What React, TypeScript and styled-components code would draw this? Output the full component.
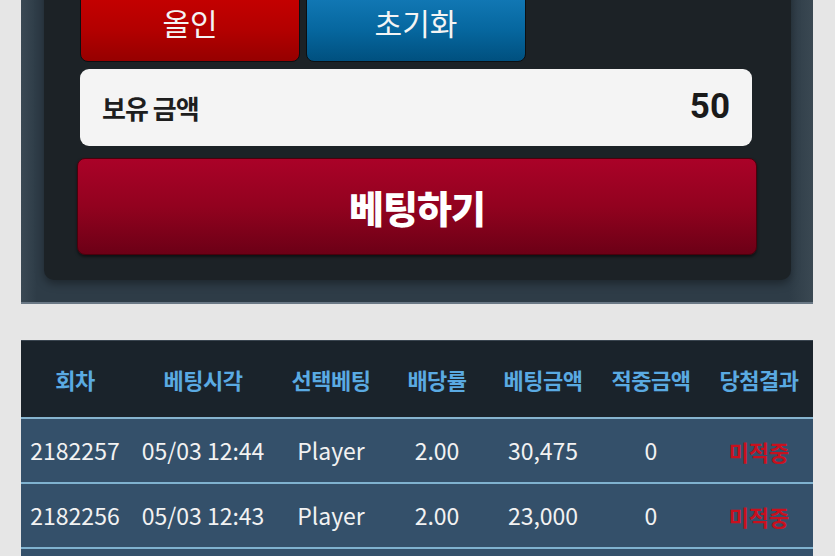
import React from 'react';
import styled, { createGlobalStyle } from 'styled-components';

const GlobalStyle = createGlobalStyle`
  html, body {
    margin: 0;
    padding: 0;
    background: #e6e6e6;
    overflow: hidden;
  }
  body {
    font-family: "Noto Sans CJK KR", "Noto Sans", sans-serif;
  }
`;

type Bet = {
  round: string;
  time: string;
  pick: string;
  odds: string;
  amount: string;
  win: string;
  result: string;
};

const bets: Bet[] = [
  { round: '2182257', time: '05/03 12:44', pick: 'Player', odds: '2.00', amount: '30,475', win: '0', result: '미적중' },
  { round: '2182256', time: '05/03 12:43', pick: 'Player', odds: '2.00', amount: '23,000', win: '0', result: '미적중' },
  { round: '2182255', time: '05/03 12:42', pick: 'Banker', odds: '1.95', amount: '10,000', win: '0', result: '미적중' },
];

const columns = ['회차', '베팅시각', '선택베팅', '배당률', '베팅금액', '적중금액', '당첨결과'];

const Page = styled.div`
  margin-top: -58px;
  padding: 0 22px 40px 21px;
  display: flex;
  flex-direction: column;
  gap: 36px;
`;

const OuterPanel = styled.section`
  background: linear-gradient(90deg, #3a4954 0%, #2e3c47 2%, #2e3c47 97%, #3a4852 100%);
  border-bottom: 2px solid #6a7885;
  padding: 20px 22px 22px 23px;
`;

const InnerPanel = styled.div`
  background: #1c2226;
  border-radius: 0 0 10px 10px;
  box-shadow: 0 4px 8px rgba(0, 0, 0, 0.35);
  padding: 20px 39px 25px 36px;
  display: flex;
  flex-direction: column;
`;

const ButtonRow = styled.div`
  display: flex;
  gap: 6px;
`;

const ActionButton = styled.button<{ $tone: 'red' | 'blue' }>`
  width: 220px;
  height: 80px;
  border: 1px solid #0c0f12;
  border-radius: 8px;
  padding: 0;
  color: #f4f4f4;
  font-family: "Noto Sans CJK KR", sans-serif;
  font-size: 30px;
  line-height: 1;
  font-weight: 400;
  display: flex;
  align-items: center;
  justify-content: center;
  background: ${({ $tone }) =>
    $tone === 'red'
      ? 'linear-gradient(180deg, #cc0000 0%, #b30000 60%, #960000 100%)'
      : 'linear-gradient(180deg, #1780bf 0%, #06679f 60%, #00507f 100%)'};
`;

const BalanceBox = styled.div`
  margin-top: 7px;
  height: 77px;
  background: #f4f4f4;
  border-radius: 9px;
  display: flex;
  align-items: center;
  justify-content: space-between;
  padding: 0 22px;
`;

const BalanceLabel = styled.span`
  font-family: "Noto Sans CJK KR", sans-serif;
  font-size: 26px;
  line-height: 1;
  font-weight: 700;
  color: #1e1e1e;
  letter-spacing: -1px;
`;

const BalanceValue = styled.span`
  font-family: Roboto, "Liberation Sans", sans-serif;
  font-size: 35px;
  line-height: 1;
  font-weight: 700;
  color: #1a1a1a;
  margin-bottom: 2px;
`;

const BetButton = styled.button`
  margin: 12px -5px 0 -3px;
  height: 97px;
  border: 1px solid #4a000c;
  border-radius: 8px;
  padding: 0;
  background: linear-gradient(180deg, #aa0228 0%, #92021f 50%, #6c0016 100%);
  box-shadow: 0 2px 3px rgba(0, 0, 0, 0.5);
  color: #ffffff;
  font-family: "Noto Sans CJK KR", sans-serif;
  font-size: 38px;
  line-height: 1;
  font-weight: 900;
  letter-spacing: -1px;
`;

const Table = styled.div`
  width: 792px;
  display: flex;
  flex-direction: column;
`;

const gridCols = '108px 148px 108px 104px 108px 108px 108px';

const HeaderRow = styled.div`
  display: grid;
  grid-template-columns: ${gridCols};
  height: 76px;
  align-items: center;
  background: #1a232b;
  border-top: 1px solid #3a4550;
  border-bottom: 2px solid #86b4cf;
`;

const HeaderCell = styled.div`
  text-align: center;
  color: #5aaae2;
  font-size: 22px;
  line-height: 1;
  font-weight: 700;
  letter-spacing: -0.5px;
`;

const BodyRow = styled.div`
  display: grid;
  grid-template-columns: ${gridCols};
  height: 63px;
  align-items: center;
  background: #34506a;
  border-bottom: 2px solid #7fb2cf;
`;

const Cell = styled.div<{ $result?: boolean }>`
  text-align: center;
  color: ${({ $result }) => ($result ? '#c8101e' : '#f2f2f2')};
  font-size: ${({ $result }) => ($result ? '22px' : '23px')};
  font-weight: ${({ $result }) => ($result ? 700 : 400)};
  line-height: 1;
  white-space: nowrap;
`;

export default function App() {
  return (
    <>
      <GlobalStyle />
      <Page>
        <OuterPanel>
          <InnerPanel>
            <ButtonRow>
              <ActionButton $tone="red">올인</ActionButton>
              <ActionButton $tone="blue">초기화</ActionButton>
            </ButtonRow>
            <BalanceBox>
              <BalanceLabel>보유 금액</BalanceLabel>
              <BalanceValue>50</BalanceValue>
            </BalanceBox>
            <BetButton>베팅하기</BetButton>
          </InnerPanel>
        </OuterPanel>

        <Table>
          <HeaderRow>
            {columns.map((c) => (
              <HeaderCell key={c}>{c}</HeaderCell>
            ))}
          </HeaderRow>
          {bets.map((b) => (
            <BodyRow key={b.round}>
              <Cell>{b.round}</Cell>
              <Cell>{b.time}</Cell>
              <Cell>{b.pick}</Cell>
              <Cell>{b.odds}</Cell>
              <Cell>{b.amount}</Cell>
              <Cell>{b.win}</Cell>
              <Cell $result>{b.result}</Cell>
            </BodyRow>
          ))}
        </Table>
      </Page>
    </>
  );
}
